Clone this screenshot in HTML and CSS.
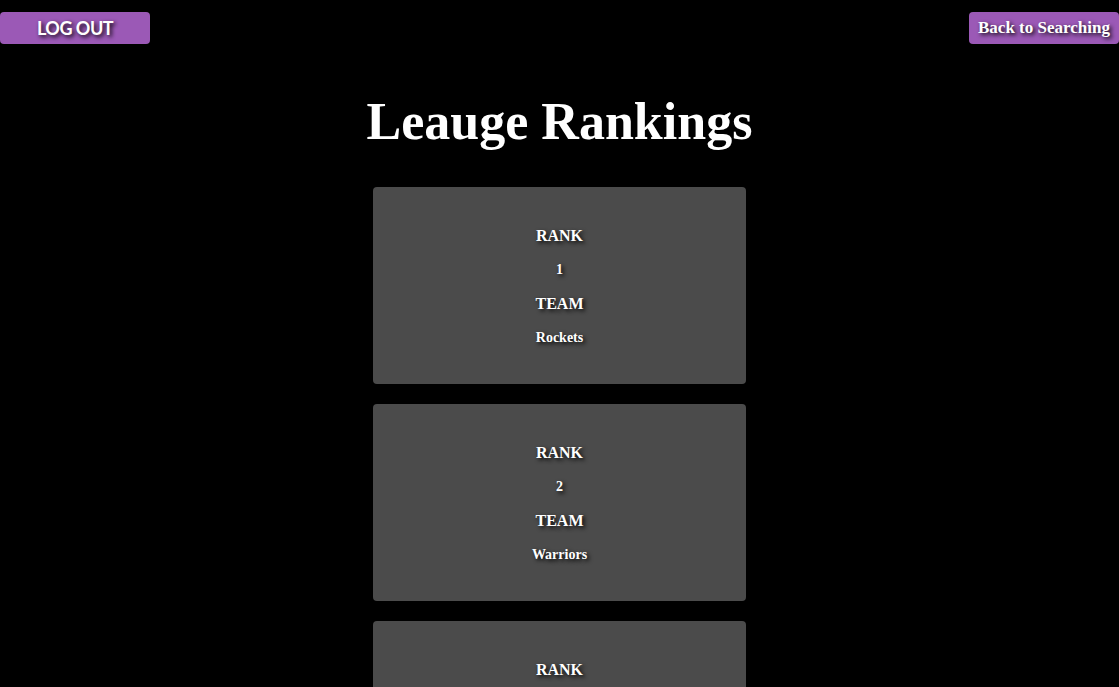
FILE: index.html
```html
<!DOCTYPE html>
<html>
<head>
<meta charset="utf-8">
<title>Leauge Rankings</title>
<link rel="stylesheet" href="styles.css">
</head>
<body>
<header class="topbar">
  <button class="btn btn-logout">LOG OUT</button>
  <button class="btn btn-back">Back to Searching</button>
</header>
<h1 class="title">Leauge Rankings</h1>
<main class="list">
  <section class="card">
    <div class="label">RANK</div>
    <div class="value">1</div>
    <div class="label">TEAM</div>
    <div class="value">Rockets</div>
  </section>
  <section class="card">
    <div class="label">RANK</div>
    <div class="value">2</div>
    <div class="label">TEAM</div>
    <div class="value">Warriors</div>
  </section>
  <section class="card">
    <div class="label">RANK</div>
    <div class="value">3</div>
    <div class="label">TEAM</div>
    <div class="value">Celtics</div>
  </section>
</main>
</body>
</html>
```
FILE: styles.css
```css
html, body {
  margin: 0;
  padding: 0;
  background: #000;
  color: #fff;
  font-family: "Liberation Serif", "Times New Roman", serif;
}
.topbar {
  display: flex;
  justify-content: space-between;
  padding-top: 12px;
}
.btn {
  width: 150px;
  height: 32px;
  border: none;
  border-radius: 4px;
  background: #9b59b6;
  color: #fff;
  padding: 0;
  text-shadow: 2px 2px 4px #000;
  cursor: pointer;
}
.btn-logout {
  font-family: Lato, "Open Sans", sans-serif;
  font-weight: 700;
  font-size: 18px;
  letter-spacing: -0.5px;
}
.btn-back {
  font-family: "Liberation Serif", "Times New Roman", serif;
  font-weight: 700;
  font-size: 17px;
}
.title {
  margin: 48px 0 35px;
  font-size: 52px;
  line-height: 60px;
  font-weight: 700;
  text-align: center;
}
.list {
  display: flex;
  flex-direction: column;
  align-items: center;
  gap: 20px;
}
.card {
  width: 373px;
  box-sizing: border-box;
  padding: 32px 0 29px;
  background: #4b4b4b;
  border-radius: 4px;
  text-align: center;
  font-weight: 700;
  text-shadow: 2px 2px 4px #000;
}
.label {
  font-size: 16px;
  line-height: 34px;
}
.value {
  font-size: 14px;
  line-height: 34px;
}
```
